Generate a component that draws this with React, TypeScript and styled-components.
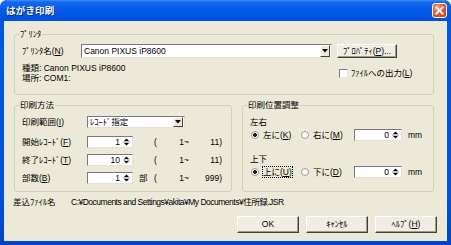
import React from "react";
import styled, { createGlobalStyle } from "styled-components";

const GlobalStyle = createGlobalStyle`
  html, body {
    margin: 0;
    padding: 0;
    background: #ffffff;
  }
  body {
    font-family: "Liberation Sans", "Noto Sans CJK JP", sans-serif;
    font-size: 8.5px;
    line-height: 11px;
    color: #000000;
  }
  u {
    text-underline-offset: 1px;
  }
`;

const Window = styled.div`
  width: 451px;
  height: 245px;
  box-sizing: border-box;
  display: flex;
  flex-direction: column;
  background: linear-gradient(180deg, #0058e8 0%, #0052e0 80%, #0043c6 100%);
  border-radius: 7px 7px 0 0;
  overflow: hidden;
`;

const TitleBar = styled.div`
  flex: none;
  height: 21px;
  display: flex;
  align-items: center;
  justify-content: space-between;
  padding: 0 4px 0 6px;
  background: linear-gradient(
    180deg,
    #3f8ff7 0%,
    #1468ef 10%,
    #0a5ee9 35%,
    #0057e5 70%,
    #0050dc 100%
  );
`;

const Title = styled.span`
  font-family: "Noto Sans CJK JP", sans-serif;
  font-size: 9.5px;
  font-weight: 700;
  color: #ffffff;
  text-shadow: 1px 1px 0 #0b2a8a;
  letter-spacing: 0.2px;
`;

const CloseButton = styled.div`
  width: 15px;
  height: 15px;
  box-sizing: border-box;
  border: 1px solid #ffffff;
  border-radius: 3px;
  background: radial-gradient(circle at 35% 30%, #f2a08a 0%, #e35d36 45%, #c43a12 100%);
  display: flex;
  align-items: center;
  justify-content: center;
`;

const Client = styled.div`
  flex: 1;
  margin: 0 4px 4px 4px;
  padding: 7px 10px 8px 10px;
  background: #ece9d8;
  display: flex;
  flex-direction: column;
`;

const Group = styled.fieldset<{ $w?: number }>`
  margin: 0;
  min-width: 0;
  box-sizing: border-box;
  width: ${(p) => (p.$w ? `${p.$w}px` : "auto")};
  border: 1px solid #d0d0bf;
  border-radius: 3px;
  padding: 4px 6px 11px 7px;
`;

const Legend = styled.legend`
  padding: 0 1px;
  margin-left: -3px;
  line-height: 12px;
  font-size: 8.5px;
`;

const PrinterGroup = styled(Group)`
  margin-right: 3px;
`;

const PrinterGrid = styled.div`
  display: grid;
  grid-template-columns: 54px 251px 60px;
  column-gap: 5px;
  row-gap: 5px;
  align-items: center;
`;

const FieldLabel = styled.span`
  white-space: nowrap;
`;

const ComboBox = styled.div<{ $w: number; $h: number }>`
  width: ${(p) => p.$w}px;
  height: ${(p) => p.$h}px;
  box-sizing: border-box;
  display: flex;
  align-items: stretch;
  background: #ffffff;
  border: 1px solid;
  border-color: #7a7a7a #e4e2d8 #e4e2d8 #7a7a7a;
`;

const ComboText = styled.span`
  flex: 1;
  padding-left: 2px;
  white-space: nowrap;
  overflow: hidden;
  display: flex;
  align-items: center;
`;

const DropButton = styled.div`
  width: 10px;
  margin: 0 1px 0 0;
  box-sizing: border-box;
  background: #ece9d8;
  border: 1px solid;
  border-color: #ffffff #404040 #404040 #ffffff;
  display: flex;
  align-items: center;
  justify-content: center;
`;

const PushButton = styled.div<{ $w: number; $h: number }>`
  width: ${(p) => p.$w}px;
  height: ${(p) => p.$h}px;
  box-sizing: border-box;
  display: flex;
  align-items: center;
  justify-content: center;
  white-space: nowrap;
  background: #efede4;
  border: 1px solid;
  border-color: #ffffff #404040 #404040 #ffffff;
  box-shadow: inset -1px -1px 0 #9d9a8e;
`;

const InfoLines = styled.div`
  grid-column: 1 / span 2;
  line-height: 10px;
`;

const CheckRow = styled.label`
  display: flex;
  align-items: center;
  gap: 3px;
  padding-left: 2px;
  white-space: nowrap;
`;

const CheckBox = styled.span`
  flex: none;
  width: 9px;
  height: 9px;
  box-sizing: border-box;
  background: #ffffff;
  border: 1px solid;
  border-color: #808080 #e8e6dc #e8e6dc #808080;
`;

const Columns = styled.div`
  display: flex;
  gap: 10px;
  margin-top: 4px;
  margin-right: 3px;
`;

const MethodGroup = styled(Group)`
  padding: 5px 6px 7px 7px;
  display: flex;
  flex-direction: column;
`;

const FormRow = styled.div<{ $gap: number }>`
  display: grid;
  grid-template-columns: 65px 46px 21px 38px 30px;
  height: 12px;
  align-items: center;
  margin-top: ${(p) => p.$gap}px;
`;

const Unit = styled.span`
  padding-left: 6px;
`;

const RangeOpen = styled.span`
  display: flex;
  justify-content: space-between;
  padding-right: 3px;
`;

const RangeMax = styled.span`
  text-align: right;
`;

const SpinBox = styled.div<{ $w: number }>`
  width: ${(p) => p.$w}px;
  height: 12px;
  box-sizing: border-box;
  display: flex;
  align-items: center;
  background: #ffffff;
  border: 1px solid;
  border-color: #7a7a7a #e4e2d8 #e4e2d8 #7a7a7a;
`;

const SpinValue = styled.span`
  flex: 1;
  text-align: right;
  padding-right: 2px;
  line-height: 10px;
`;

const PositionGroup = styled(Group)`
  flex: 1;
  padding: 5px 6px 13px 7px;
  display: flex;
  flex-direction: column;
`;

const AxisLabel = styled.div<{ $gap: number }>`
  line-height: 13px;
  margin-top: ${(p) => p.$gap}px;
`;

const PositionRow = styled.div`
  display: flex;
  align-items: center;
  height: 12px;
`;

const RadioItem = styled.span<{ $w: number }>`
  width: ${(p) => p.$w}px;
  display: flex;
  align-items: center;
  gap: 4px;
  padding-left: 1px;
  box-sizing: border-box;
  white-space: nowrap;
`;

const Radio = styled.span<{ $checked?: boolean }>`
  flex: none;
  width: 8px;
  height: 8px;
  box-sizing: border-box;
  border-radius: 50%;
  border: 1px solid #9c9c94;
  background: ${(p) =>
    p.$checked
      ? "radial-gradient(circle, #1c1c1c 0 1.6px, #ffffff 2.2px)"
      : "#ffffff"};
`;

const RadioText = styled.span<{ $focused?: boolean }>`
  outline: ${(p) => (p.$focused ? "1px dotted #000000" : "none")};
  outline-offset: 0;
  line-height: 10px;
`;

const Mm = styled.span`
  margin-left: 6px;
`;

const FileRow = styled.div`
  display: flex;
  margin-top: 5px;
  margin-left: -1px;
  line-height: 10px;
  white-space: nowrap;
`;

const FileLabel = styled.span`
  width: 58px;
`;

const FilePath = styled.span`
  letter-spacing: -0.5px;
`;

const ButtonRow = styled.div`
  display: flex;
  justify-content: flex-end;
  gap: 7px;
  margin-top: 9px;
`;

const ArrowDown = () => (
  <svg width="6" height="4" viewBox="0 0 6 4">
    <path d="M0 0 H6 L3 3.5 Z" fill="#000000" />
  </svg>
);

const SpinArrows = () => (
  <svg width="9" height="10" viewBox="0 0 9 10" style={{ marginRight: 1 }}>
    <path d="M2 4 L4.5 1.5 L7 4 Z" fill="#000000" />
    <line x1="1" y1="5" x2="8" y2="5" stroke="#8a8a8a" strokeWidth="1" />
    <path d="M2 6 H7 L4.5 8.5 Z" fill="#000000" />
  </svg>
);

const Spinner = ({ value, w }: { value: string; w: number }) => (
  <SpinBox $w={w}>
    <SpinValue>{value}</SpinValue>
    <SpinArrows />
  </SpinBox>
);

const CloseIcon = () => (
  <svg width="9" height="9" viewBox="0 0 9 9">
    <path d="M1.2 1.2 L7.8 7.8 M7.8 1.2 L1.2 7.8" stroke="#ffffff" strokeWidth="1.7" strokeLinecap="square" />
  </svg>
);

const ranges = [
  { label: "開始ﾚｺｰﾄﾞ(", key: "F", value: "1", unit: "", max: "11)", gap: 8 },
  { label: "終了ﾚｺｰﾄﾞ(", key: "T", value: "10", unit: "", max: "11)", gap: 6 },
  { label: "部数(", key: "B", value: "1", unit: "部", max: "999)", gap: 6 },
];

export default function App() {
  return (
    <>
      <GlobalStyle />
      <Window>
        <TitleBar>
          <Title>はがき印刷</Title>
          <CloseButton>
            <CloseIcon />
          </CloseButton>
        </TitleBar>
        <Client>
          <PrinterGroup>
            <Legend>ﾌﾟﾘﾝﾀ</Legend>
            <PrinterGrid>
              <FieldLabel>
                ﾌﾟﾘﾝﾀ名(<u>N</u>)
              </FieldLabel>
              <ComboBox $w={251} $h={14}>
                <ComboText>Canon PIXUS iP8600</ComboText>
                <DropButton>
                  <ArrowDown />
                </DropButton>
              </ComboBox>
              <PushButton $w={60} $h={14}>
                ﾌﾟﾛﾊﾟﾃｨ(<u>P</u>)...
              </PushButton>
              <InfoLines>
                種類: Canon PIXUS iP8600
                <br />
                場所: COM1:
              </InfoLines>
              <CheckRow>
                <CheckBox />
                <span>
                  ﾌｧｲﾙへの出力(<u>L</u>)
                </span>
              </CheckRow>
            </PrinterGrid>
          </PrinterGroup>

          <Columns>
            <MethodGroup $w={218}>
              <Legend>印刷方法</Legend>
              <FormRow $gap={0}>
                <FieldLabel>
                  印刷範囲(<u>I</u>)
                </FieldLabel>
                <div style={{ gridColumn: "2 / span 3" }}>
                  <ComboBox $w={98} $h={12}>
                    <ComboText>ﾚｺｰﾄﾞ指定</ComboText>
                    <DropButton>
                      <ArrowDown />
                    </DropButton>
                  </ComboBox>
                </div>
              </FormRow>
              {ranges.map((r) => (
                <FormRow $gap={r.gap} key={r.key}>
                  <FieldLabel>
                    {r.label}
                    <u>{r.key}</u>)
                  </FieldLabel>
                  <Spinner value={r.value} w={46} />
                  <Unit>{r.unit}</Unit>
                  <RangeOpen>
                    <span>(</span>
                    <span>1~</span>
                  </RangeOpen>
                  <RangeMax>{r.max}</RangeMax>
                </FormRow>
              ))}
            </MethodGroup>

            <PositionGroup>
              <Legend>印刷位置調整</Legend>
              <AxisLabel $gap={0}>左右</AxisLabel>
              <PositionRow>
                <RadioItem $w={50}>
                  <Radio $checked />
                  <RadioText>
                    左に(<u>K</u>)
                  </RadioText>
                </RadioItem>
                <RadioItem $w={54}>
                  <Radio />
                  <RadioText>
                    右に(<u>M</u>)
                  </RadioText>
                </RadioItem>
                <Spinner value="0" w={48} />
                <Mm>mm</Mm>
              </PositionRow>
              <AxisLabel $gap={12}>上下</AxisLabel>
              <PositionRow>
                <RadioItem $w={50}>
                  <Radio $checked />
                  <RadioText $focused>
                    上に(<u>U</u>)
                  </RadioText>
                </RadioItem>
                <RadioItem $w={54}>
                  <Radio />
                  <RadioText>
                    下に(<u>D</u>)
                  </RadioText>
                </RadioItem>
                <Spinner value="0" w={48} />
                <Mm>mm</Mm>
              </PositionRow>
            </PositionGroup>
          </Columns>

          <FileRow>
            <FileLabel>差込ﾌｧｲﾙ名</FileLabel>
            <FilePath>C:¥Documents and Settings¥akita¥My Documents¥住所録.JSR</FilePath>
          </FileRow>

          <ButtonRow>
            <PushButton $w={62} $h={17}>OK</PushButton>
            <PushButton $w={62} $h={17}>ｷｬﾝｾﾙ</PushButton>
            <PushButton $w={62} $h={17}>
              ﾍﾙﾌﾟ(<u>H</u>)
            </PushButton>
          </ButtonRow>
        </Client>
      </Window>
    </>
  );
}
